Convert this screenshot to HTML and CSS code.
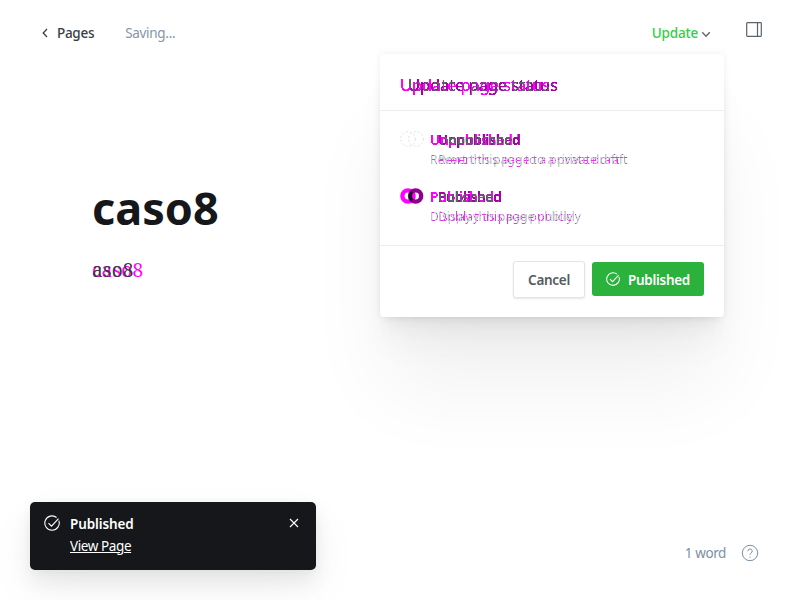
FILE: index.html
```html
<!DOCTYPE html>
<html lang="en">
<head>
<meta charset="utf-8">
<title>caso8</title>
<link rel="stylesheet" href="styles.css">
</head>
<body>
<svg class="defs" width="0" height="0" aria-hidden="true">
  <filter id="trail" x="0" y="-10%" width="130%" height="120%" color-interpolation-filters="sRGB">
    <feOffset in="SourceGraphic" dx="8" result="soft"/>
    <feComponentTransfer in="SourceAlpha" result="hard"><feFuncA type="linear" slope="8" intercept="-2.4"/></feComponentTransfer>
    <feOffset in="hard" dx="8" result="moved"/>
    <feFlood flood-color="#f0f"/><feComposite in2="hard" operator="in" result="pink"/>
    <feFlood flood-color="#a800a8"/><feComposite in2="moved" operator="in" result="purple"/>
    <feFlood flood-color="#5c6267"/><feComposite in2="hard" operator="in"/><feComposite in2="moved" operator="in" result="both"/>
    <feMerge><feMergeNode in="soft"/><feMergeNode in="pink"/><feMergeNode in="purple"/><feMergeNode in="both"/></feMerge>
  </filter>
  <filter id="trail-light" x="0" y="-10%" width="130%" height="120%" color-interpolation-filters="sRGB">
    <feOffset in="SourceGraphic" dx="8" result="soft"/>
    <feComponentTransfer in="SourceAlpha" result="hard"><feFuncA type="linear" slope="12" intercept="-10.6"/></feComponentTransfer>
    <feOffset in="hard" dx="8" result="moved"/>
    <feComposite in="hard" in2="moved" operator="xor" result="edges"/>
    <feFlood flood-color="#f0f" flood-opacity=".75"/><feComposite in2="edges" operator="in" result="pink"/>
    <feMerge><feMergeNode in="SourceGraphic"/><feMergeNode in="soft"/><feMergeNode in="pink"/></feMerge>
  </filter>
</svg>
<div class="app">
  <header class="topbar">
    <a class="back"><svg width="6" height="10" viewBox="0 0 6 10"><path d="M5 1 1.2 5 5 9"/></svg><span>Pages</span></a>
    <span class="saving">Saving...</span>
    <div class="update"><span>Update</span><svg width="10" height="7" viewBox="0 0 10 7"><path d="m1.2 1.2 3.8 4 3.8-4"/></svg></div>
    <svg class="sidebar" width="16" height="15" viewBox="0 0 16 15"><path d="M1.5.7h13a.8.8 0 0 1 .8.8v12a.8.8 0 0 1-.8.8h-13a.8.8 0 0 1-.8-.8v-12a.8.8 0 0 1 .8-.8ZM11.5.7v13.6"/></svg>
  </header>
  <main class="editor">
    <h1><span>caso8</span></h1>
    <p class="content"><span class="new">caso8</span><span class="old">aso8</span></p>
  </main>
  <footer class="status"><span>1 word</span><svg width="18" height="18" viewBox="0 0 18 18"><circle cx="9" cy="9" r="7.7"/><path d="M6.8 7.2a2.2 2.2 0 1 1 3.1 2c-.7.4-.9.8-.9 1.6M9 12.6v1"/></svg></footer>
</div>
<section class="dialog">
  <h2><span class="trail">Update page status</span></h2>
  <div class="options">
    <div class="option"><svg class="radio" width="24" height="16" viewBox="0 0 24 16"><g class="dashed"><circle cx="8" cy="8" r="7.3"/><circle cx="16" cy="8" r="7.3"/></g></svg>
      <div><strong class="trail">Unpublished</strong><small>Revert this page to a private draft</small></div></div>
    <div class="option"><svg class="radio" width="24" height="16" viewBox="0 0 24 16"><circle class="pink" cx="8" cy="8" r="5.6"/><circle class="purple" cx="15.6" cy="8" r="5.6"/><path class="black" d="M12 3.8a5.6 5.6 0 0 0 0 8.4"/></svg>
      <div><strong class="trail">Published</strong><small>Display this page publicly</small></div></div>
  </div>
  <div class="actions"><button class="cancel">Cancel</button><button class="publish"><svg width="14" height="14" viewBox="0 0 16 16"><path d="M14.8 5.6A7.2 7.2 0 1 1 12.6 2.5M4.5 8.1l3 3 7-7.5"/></svg><span>Published</span></button></div>
</section>
<aside class="toast">
  <svg class="check" width="16" height="16" viewBox="0 0 16 16"><path d="M14.8 5.6A7.2 7.2 0 1 1 12.6 2.5M4.5 8.1l3 3 7-7.5"/></svg>
  <div><b>Published</b><a>View Page</a></div>
  <svg class="close" width="10" height="10" viewBox="0 0 10 10"><path d="m1 1 8 8M9 1 1 9"/></svg>
</aside>
</body>
</html>
```
FILE: styles.css
```css
*{box-sizing:border-box}
body{margin:0;width:800px;height:600px;overflow:hidden;background:#fff;font:13.5px/20px "Noto Sans","Open Sans",sans-serif;letter-spacing:-.3px;color:#394047}
svg{fill:none;stroke:currentColor;stroke-width:1.3;flex:none;display:block}
.defs{position:absolute}
.app{height:600px;display:flex;flex-direction:column}
.topbar{height:65px;padding:0 38px 0 42px;display:flex;align-items:center}
.back{display:flex;align-items:center;gap:9px;font-weight:500}
.saving{margin-left:31px;color:#8496a8}
.update{margin-left:auto;display:flex;align-items:center;gap:3px;color:#30cf43;font-weight:500;letter-spacing:-.2px;padding-top:1px}
.update svg{color:#626d79;stroke-width:1.5;margin-top:2px}
.sidebar{margin:-6px 0 0 35px;stroke-width:1.2;color:#5c636b}
.editor{flex:1;padding:113px 92px}
h1{margin:0;font-size:45px;line-height:60px;font-weight:700;letter-spacing:0;color:#15171a}
.content{margin:20px 0 0;display:grid;font:19px/24px "Noto Serif","DejaVu Serif","Liberation Serif",serif;letter-spacing:0}
.content span{grid-area:1/1}
.new{color:#f0f;letter-spacing:.2px}
.old{color:#3d3347;letter-spacing:.2px}
.status{height:67px;padding:0 41px 27px 0;display:flex;justify-content:flex-end;align-items:center;gap:15px;color:#7c8fa3}
.status span{letter-spacing:-.4px}
.status svg{stroke-width:1}
.dialog{position:absolute;left:380px;top:54px;width:344px;height:263px;border-radius:4px;background:#fff;display:flex;flex-direction:column;box-shadow:0 0 7px rgba(0,0,0,.07),0 2.1px 2.2px -5px rgba(0,0,0,.02),0 5.1px 5.3px -5px rgba(0,0,0,.02),0 9.5px 10px -5px rgba(0,0,0,.03),0 17px 18px -5px rgba(0,0,0,.03),0 32px 33px -5px rgba(0,0,0,.035),0 76px 80px -5px rgba(0,0,0,.055)}
h2{margin:0;height:57px;padding:19px 20px 0;border-bottom:1px solid #ececec;font-size:16.5px;line-height:24px;font-weight:400}
h2 .trail{letter-spacing:-.1px}
.trail{display:inline-block;filter:url(#trail)}
.options{height:135px;padding:19px 20px;border-bottom:1px solid #ececec;display:flex;flex-direction:column;gap:19px}
.option{height:38px;display:flex;gap:6px}
.option>div{display:flex;flex-direction:column;align-items:flex-start}
strong{font-size:13.5px;line-height:21px;font-weight:600;letter-spacing:-.1px}
small{font-size:12px;line-height:17px;letter-spacing:.02px;color:#b9c0c7;filter:url(#trail-light)}
.radio{margin-top:1px}
.dashed{stroke:#dde1e5;stroke-width:1;stroke-dasharray:2 2}
.pink{stroke:#f0f;stroke-width:4.4}
.purple{stroke:#900090;stroke-width:4.4}
.black{stroke:#15171a;stroke-width:3}
.actions{padding:15px 20px;display:flex;justify-content:flex-end;align-items:flex-start;gap:7px}
button{border:0;border-radius:3px;font:600 13.5px/18px "Noto Sans","Open Sans",sans-serif;letter-spacing:-.3px;padding:0;display:flex;align-items:center;justify-content:center}
.cancel{width:72px;height:37px;background:#fff;border:1px solid #e3e6e8;color:#545b61;box-shadow:0 1px 2px rgba(0,0,0,.1)}
.publish{width:112px;height:34px;margin-top:1px;background:#2ab23c;color:#fff;gap:8px}
.publish span{padding-top:2px}
.publish svg{stroke-width:1.2}
.toast{position:absolute;left:30px;top:501.5px;width:286px;height:68.5px;padding:12px 17px 0 14px;border-radius:5px;background:#15171a;color:#fff;display:flex;box-shadow:0 0 10px rgba(0,0,0,.04),0 12px 20px rgba(0,0,0,.07),0 20px 50px rgba(0,0,0,.05)}
.toast>div{margin-left:10px;display:flex;flex-direction:column;align-items:flex-start;gap:2px}
.toast b{font-weight:600;letter-spacing:-.1px}
.toast a{text-decoration:underline;letter-spacing:-.4px}
.check{margin-top:1.5px}
.toast .check,.toast .close{stroke-width:1.1}
.close{margin:4.5px 0 0 auto}
```
